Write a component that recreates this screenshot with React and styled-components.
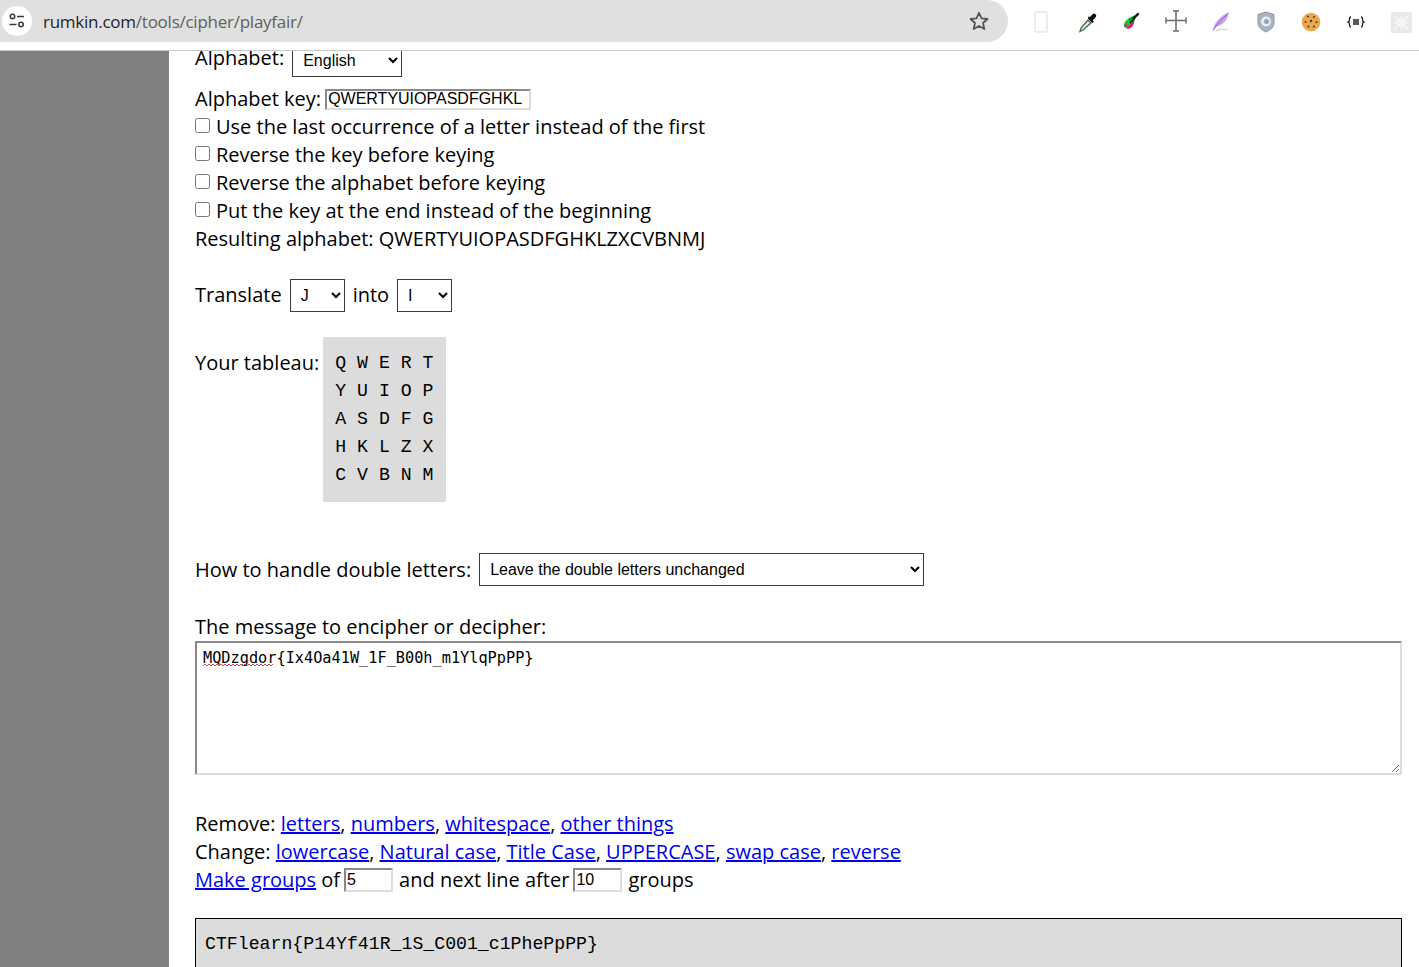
import React from "react";
import styled, { createGlobalStyle } from "styled-components";

const GlobalStyle = createGlobalStyle`
  html, body {
    margin: 0;
    height: 100%;
    overflow: hidden;
    background: #fff;
  }
  #root {
    height: 100%;
  }
`;

const Window = styled.div`
  display: grid;
  grid-template-rows: 51px 1fr;
  height: 967px;
  width: 1419px;
  overflow: hidden;
`;

const BrowserBar = styled.header`
  display: flex;
  align-items: flex-start;
  background: #fff;
  border-bottom: 1px solid #c8c8c8;
  position: relative;
  z-index: 2;
`;

const Omnibox = styled.div`
  display: flex;
  align-items: center;
  width: 1008px;
  height: 42px;
  background: #e0e0e0;
  border-radius: 0 21px 21px 0;
`;

const SiteButton = styled.div`
  display: flex;
  align-items: center;
  justify-content: center;
  width: 30px;
  height: 30px;
  margin-left: 2px;
  border-radius: 50%;
  background: #fff;
`;

const Url = styled.div`
  flex: 1;
  margin-left: 11px;
  font: 17px "Open Sans", sans-serif;
  letter-spacing: -0.25px;
  color: #5f5f5f;
  span {
    color: #1f1f1f;
  }
`;

const StarButton = styled.div`
  display: flex;
  margin-right: 19px;
`;

const Extensions = styled.div`
  display: flex;
  height: 44px;
  align-items: center;
  margin-left: 10.5px;
`;

const Extension = styled.div`
  display: flex;
  align-items: center;
  justify-content: center;
  width: 45px;
`;

const Layout = styled.div`
  display: grid;
  grid-template-columns: 169px 1fr;
  min-height: 0;
`;

const Sidebar = styled.aside`
  background: #808080;
`;

const Content = styled.main`
  padding: 0 22px 0 26px;
  font: 20px/28px "Open Sans", sans-serif;
  color: #000;
  overflow: hidden;
  min-width: 0;
`;

const Line = styled.div`
  display: flex;
  align-items: center;
  height: 28px;
  white-space: pre;
  margin-top: ${(p) => p.$top || 0}px;
`;

const FirstLine = styled(Line)`
  margin-top: -7px;
  margin-bottom: 8px;
  height: 33px;
  align-items: flex-start;
  line-height: 28px;
`;

const Select = styled.select`
  width: ${(p) => p.$width}px;
  height: 33px;
  margin: 0 8px;
  padding: 0 6px;
  border: 1px solid #3c3c3c;
  border-radius: 0;
  background-color: #fff;
  color: #000;
  font: 16px "Liberation Sans", Arial, sans-serif;
`;

const TextField = styled.input`
  box-sizing: border-box;
  width: ${(p) => p.$width}px;
  height: ${(p) => p.$height}px;
  margin: 0 ${(p) => p.$gap || 0}px 0 4px;
  padding: 0 1px;
  border: 2px inset #ddd;
  border-radius: 0;
  font: 16px "Liberation Sans", Arial, sans-serif;
  color: #000;
`;

const Check = styled.input`
  width: 15px;
  height: 15px;
  margin: 0 6px 3px 0;
`;

const TableauRow = styled.div`
  display: flex;
  align-items: flex-start;
  margin-top: 28px;
`;

const TableauLabel = styled.span`
  margin: 12px 4px 0 0;
`;

const Tableau = styled.pre`
  margin: 0;
  padding: 12px 12px 13px;
  width: 99px;
  background: #dcdcdc;
  font: 18.2px/28px "Liberation Mono", monospace;
`;

const DoubleLine = styled(Line)`
  margin-top: 51px;
  height: 33px;
`;

const MessageLabel = styled.div`
  margin-top: 27px;
  height: 28px;
`;

const MessageBox = styled.div`
  position: relative;
  margin-top: 0;
  height: 134px;
`;

const Message = styled.textarea`
  box-sizing: border-box;
  display: block;
  width: 100%;
  height: 134px;
  margin: 0;
  padding: 6px 6px;
  border: 2px inset #ddd;
  border-radius: 0;
  outline: none;
  font: 15.25px/19px "DejaVu Sans Mono", monospace;
  color: #000;
  background: #fff;
`;

const Squiggle = styled.svg`
  position: absolute;
  left: 8px;
  top: 22px;
`;

const Tools = styled.div`
  margin-top: 35px;
`;

const ToolLine = styled.div`
  display: flex;
  align-items: center;
  height: 28px;
  white-space: pre;
  a {
    color: #0000ee;
    text-decoration: underline;
  }
`;

const Output = styled.div`
  box-sizing: border-box;
  height: 70px;
  margin-top: 24px;
  padding: 11px 9px;
  border: 1px solid #000;
  background: #dcdcdc;
  font: 18.2px/28px "Liberation Mono", monospace;
`;

const SiteIcon = () => (
  <svg width="18" height="16" viewBox="0 0 18 16" fill="none" stroke="#3c3c3c" strokeWidth="1.6">
    <circle cx="4.5" cy="3.5" r="2.2" />
    <path d="M9 3.5h7M1.5 11.5h7" />
    <circle cx="13" cy="11.5" r="2.2" />
  </svg>
);

const StarIcon = () => (
  <svg width="20" height="20" viewBox="0 0 20 20" fill="none" stroke="#555" strokeWidth="1.8" strokeLinejoin="round">
    <path d="M10 1.8l2.5 5.6 6 .6-4.5 4 1.3 6L10 15l-5.3 3 1.3-6-4.5-4 6-.6z" />
  </svg>
);

const PhoneIcon = () => (
  <svg width="14" height="22" viewBox="0 0 14 22" fill="none" stroke="#e6e6e6" strokeWidth="1.4">
    <rect x="1" y="1" width="12" height="20" rx="1.5" />
  </svg>
);

const DropperIcon = () => (
  <svg width="20" height="22" viewBox="0 0 20 22" style={{ marginLeft: 3 }}>
    <path d="M2 20.5l1-3.5 7-8 3 3-8 7z" fill="#dfe8df" stroke="#3f6a4b" strokeWidth="1.3" />
    <path d="M10 7.5l4.5 4.5 1.3-1.3-1.2-1.3 3-3.2a2 2 0 00-2.9-2.9l-3.2 3-1.2-1.1z" fill="#0c0c0c" />
  </svg>
);

const ColorFeatherIcon = () => (
  <svg width="20" height="20" viewBox="0 0 20 20">
    <path d="M3 13c0-3 2-5 4-6l3 5-4 4c-2 0-3-1-3-3z" fill="#0ad13c" />
    <path d="M7 7c2-2 5-3 8-4l-2 8-3 3z" fill="#0f9a20" />
    <path d="M5 16l6-5 2-1c0 3-2 6-6 7z" fill="#e9158f" />
    <path d="M3 13l4-2-2 5z" fill="#ee2222" />
    <path d="M13 6l4-4" stroke="#111" strokeWidth="2.4" strokeLinecap="round" />
    <path d="M9 11l5-5" stroke="#111" strokeWidth="1.2" />
  </svg>
);

const CrossIcon = () => (
  <svg width="22" height="22" viewBox="0 0 22 22" fill="none" stroke="#6a6a6a" strokeWidth="1.5" style={{ marginTop: -2 }}>
    <path d="M11 1v20M1 10.5h20M8 1h6M8 21h6M1 7.5v6M21 7.5v6" />
  </svg>
);

const PurpleFeatherIcon = () => (
  <svg width="20" height="22" viewBox="0 0 20 22">
    <path d="M2 19C3 12 9 5 18 1c-1 6-4 12-11 14-2 .6-4 2-5 4z" fill="#c6a5e8" />
    <path d="M2 19.5C6 13 11 8 17 2.5" stroke="#8b55c4" strokeWidth="1" fill="none" />
    <path d="M5 19.5c4-1.5 8-1.5 12-1" stroke="#d9d9d9" strokeWidth="1.4" fill="none" />
  </svg>
);

const ShieldIcon = () => (
  <svg width="18" height="22" viewBox="0 0 18 22">
    <path d="M9 1l8 2.5v8c0 4.5-3.5 7.5-8 9.500-4.500-2-8-5-8-9.500v-8z" fill="#a9b3c4" stroke="#8993a6" />
    <circle cx="9" cy="10.500" r="5" fill="#e8ecf2" />
    <circle cx="9.500" cy="10.500" r="2.500" fill="#99a4b8" />
  </svg>
);

const CookieIcon = () => (
  <svg width="20" height="20" viewBox="0 0 20 20">
    <circle cx="10" cy="10" r="9.300" fill="#e9a94e" />
    <g fill="#5c3a1b">
      <circle cx="7" cy="4.500" r="1.100" />
      <circle cx="13" cy="5" r="1" />
      <circle cx="4.500" cy="10" r="1" />
      <circle cx="10" cy="9" r="1.200" />
      <circle cx="15.500" cy="10" r="1.100" />
      <circle cx="7.500" cy="14.500" r="1.100" />
      <circle cx="13" cy="14.500" r="1.100" />
    </g>
  </svg>
);

const JsonIcon = () => (
  <svg width="18" height="12" viewBox="0 0 18 12" fill="none" stroke="#222" strokeWidth="1.300">
    <path d="M4 1C2.500 1 2.500 2 2.500 3.500S2.500 5.500 1 6c1.500.5 1.500 1 1.500 2.500S2.500 11 4 11" />
    <path d="M14 1c1.500 0 1.500 1 1.500 2.500S15.500 5.500 17 6c-1.500.5-1.500 1-1.500 2.500S15.500 11 14 11" />
    <path d="M6 4h6M6 6h6M6 8h6" />
  </svg>
);

const FadedPatternIcon = () => (
  <svg width="21" height="21" viewBox="0 0 21 21">
    <rect width="21" height="21" rx="1" fill="#e8e8e8" />
    <path d="M3 3l15 15M18 3L3 18M10.500 3v15M3 10.500h15" stroke="#f6f6f6" strokeWidth="1.500" />
    <circle cx="10.500" cy="10.500" r="4" fill="none" stroke="#f6f6f6" strokeWidth="1.500" />
  </svg>
);

const extensions = [
  PhoneIcon,
  DropperIcon,
  ColorFeatherIcon,
  CrossIcon,
  PurpleFeatherIcon,
  ShieldIcon,
  CookieIcon,
  JsonIcon,
  FadedPatternIcon,
];

const checks = [
  "Use the last occurrence of a letter instead of the first",
  "Reverse the key before keying",
  "Reverse the alphabet before keying",
  "Put the key at the end instead of the beginning",
];

const tableau = "Q W E R T\nY U I O P\nA S D F G\nH K L Z X\nC V B N M";

const App = () => {
  return (
    <Window>
      <GlobalStyle />
      <BrowserBar>
        <Omnibox>
          <SiteButton>
            <SiteIcon />
          </SiteButton>
          <Url>
            <span>rumkin.com</span>/tools/cipher/playfair/
          </Url>
          <StarButton>
            <StarIcon />
          </StarButton>
        </Omnibox>
        <Extensions>
          {extensions.map((Icon, i) => (
            <Extension key={i}>
              <Icon />
            </Extension>
          ))}
        </Extensions>
      </BrowserBar>
      <Layout>
        <Sidebar />
        <Content>
          <FirstLine>
            Alphabet:
            <Select $width={110} defaultValue="English">
              <option>English</option>
            </Select>
          </FirstLine>
          <Line>
            Alphabet key:
            <TextField readOnly $width={206} $height={21} value="QWERTYUIOPASDFGHKL" />
          </Line>
          {checks.map((label) => (
            <Line key={label}>
              <Check type="checkbox" />
              {label}
            </Line>
          ))}
          <Line>Resulting alphabet: QWERTYUIOPASDFGHKLZXCVBNMJ</Line>
          <Line $top={28}>
            Translate
            <Select $width={55} defaultValue="J">
              <option>J</option>
            </Select>
            into
            <Select $width={55} defaultValue="I">
              <option>I</option>
            </Select>
          </Line>
          <TableauRow>
            <TableauLabel>Your tableau:</TableauLabel>
            <Tableau>{tableau}</Tableau>
          </TableauRow>
          <DoubleLine>
            How to handle double letters:
            <Select $width={445} defaultValue="leave">
              <option value="leave">Leave the double letters unchanged</option>
            </Select>
          </DoubleLine>
          <MessageLabel>The message to encipher or decipher:</MessageLabel>
          <MessageBox>
            <Message readOnly spellCheck={false} value="MQDzgdor{Ix4Oa41W_1F_B00h_m1YlqPpPP}" />
            <Squiggle width="73" height="4" viewBox="0 0 73 4" fill="none" stroke="#e2403c" strokeWidth="1">
              <path d="M0 3l2-2 2 2 2-2 2 2 2-2 2 2 2-2 2 2 2-2 2 2 2-2 2 2 2-2 2 2 2-2 2 2 2-2 2 2 2-2 2 2 2-2 2 2 2-2 2 2 2-2 2 2 2-2 2 2 2-2 2 2 2-2 2 2 2-2 2 2 2-2" />
            </Squiggle>
          </MessageBox>
          <Tools>
            <ToolLine>
              Remove: <a href="#letters">letters</a>, <a href="#numbers">numbers</a>,{" "}
              <a href="#whitespace">whitespace</a>, <a href="#other">other things</a>
            </ToolLine>
            <ToolLine>
              Change: <a href="#lower">lowercase</a>, <a href="#natural">Natural case</a>,{" "}
              <a href="#title">Title Case</a>, <a href="#upper">UPPERCASE</a>, <a href="#swap">swap case</a>,{" "}
              <a href="#reverse">reverse</a>
            </ToolLine>
            <ToolLine>
              <a href="#groups">Make groups</a> of
              <TextField readOnly $width={49} $height={24} $gap={6} value="5" />
              and next line after
              <TextField readOnly $width={49} $height={24} $gap={6} value="10" />
              groups
            </ToolLine>
          </Tools>
          <Output>CTFlearn{"{P14Yf41R_1S_C001_c1PhePpPP}"}</Output>
        </Content>
      </Layout>
    </Window>
  );
};

export default App;
